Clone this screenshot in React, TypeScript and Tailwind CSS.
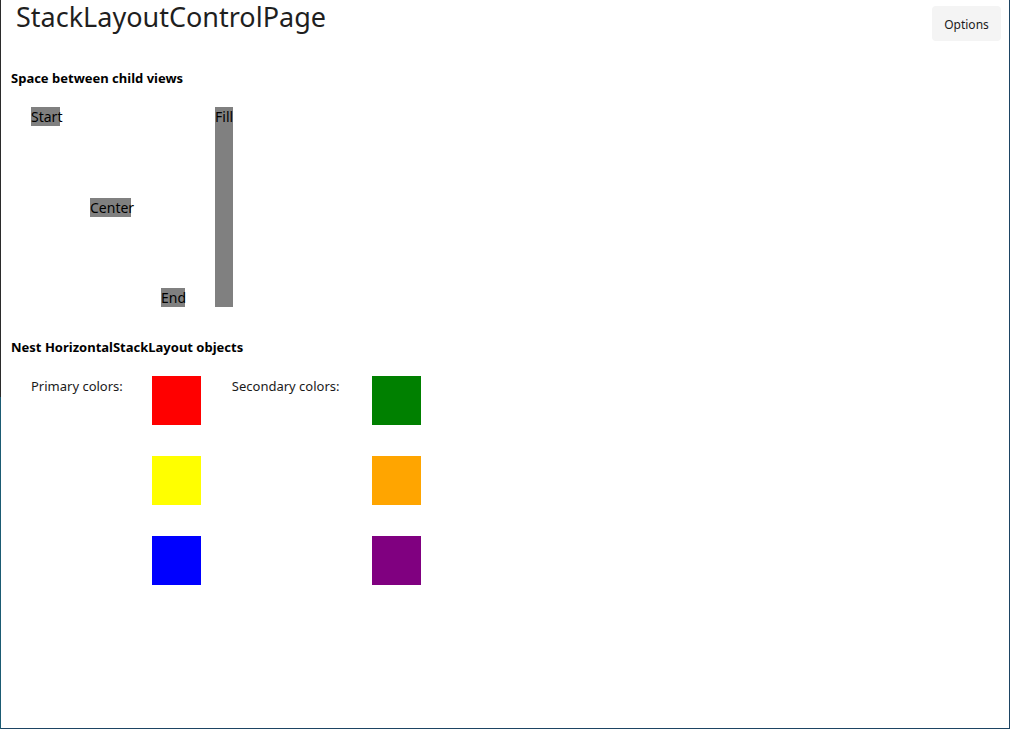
const font = { fontFamily: '"Noto Sans", "Open Sans", sans-serif' };

function Box({ label, w, className }: { label: string; w: string; className: string }) {
  return (
    <div className={`${w} ${className} bg-[#808080] text-[14px] leading-[19px] text-black whitespace-nowrap`}>{label}</div>
  );
}

function Swatch({ color }: { color: string }) {
  return <div className={`h-[49px] w-[49px] ${color}`} />;
}

export default function App() {
  return (
    <div className="flex h-[729px] w-[1010px] bg-white text-[#1a1a1a]" style={font}>
      <div className="flex w-px flex-col">
        <div className="h-[397px] bg-[#2b2b2b]" />
        <div className="flex-1 bg-[#1b5b73]" />
      </div>
      <div className="flex flex-1 flex-col border-r border-b border-[#1d4463]">
        <div className="flex items-start justify-between">
          <h1 className="pl-[15px] pt-0 text-[27px] leading-[34px] text-[#1f1f1f]">StackLayoutControlPage</h1>
          <button className="mr-[8px] mt-[6px] h-[35px] w-[69px] rounded-[4px] bg-[#f4f4f4] pt-[3px] text-[12px] text-[#1b1b1b]">
            Options
          </button>
        </div>

        <div className="pl-[10px]">
          <h2 className="mt-[28px] text-[13px] font-bold leading-[18px] text-black">Space between child views</h2>
          <div className="ml-[20px] mt-[20px] flex h-[200px] gap-[30px]">
            <Box label="Start" w="w-[29px]" className="h-[19px] self-start" />
            <Box label="Center" w="w-[41px]" className="h-[19px] self-center" />
            <Box label="End" w="w-[24px]" className="h-[19px] self-end" />
            <Box label="Fill" w="w-[18px]" className="self-stretch" />
          </div>

          <h2 className="mt-[31px] text-[13px] font-bold leading-[18px] text-black">Nest HorizontalStackLayout objects</h2>
          <div className="ml-[20px] mt-[20px] flex gap-[31px]">
            <div className="flex gap-[29px]">
              <span className="text-[13px] leading-[20px] text-[#1a1a1a]">Primary colors:</span>
              <div className="flex flex-col gap-[31px]">
                <Swatch color="bg-[#ff0000]" />
                <Swatch color="bg-[#ffff00]" />
                <Swatch color="bg-[#0000ff]" />
              </div>
            </div>
            <div className="flex gap-[32px]">
              <span className="text-[13px] leading-[20px] text-[#1a1a1a]">Secondary colors:</span>
              <div className="flex flex-col gap-[31px]">
                <Swatch color="bg-[#008000]" />
                <Swatch color="bg-[#ffa500]" />
                <Swatch color="bg-[#800080]" />
              </div>
            </div>
          </div>
        </div>
      </div>
    </div>
  );
}
